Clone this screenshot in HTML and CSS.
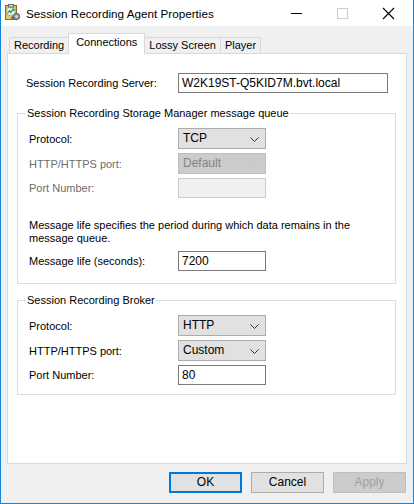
FILE: index.html
```html
<!DOCTYPE html>
<html lang="en">
    <head>
        <title>Session Recording Agent Properties</title>
        <meta charset="utf-8" />
        <link rel="stylesheet" href="styles.css">
    </head>

    <body>
        <div class="window">
            <div class="titleBar">
                <svg class="appIcon" width="16" height="17" viewBox="0 0 16 17">
                    <!-- clipboard with a small chart, plus a gear -->
                    <rect x="0.5" y="1.5" width="11" height="14" fill="#e8c46a" stroke="#8a6a20" />
                    <rect x="3.5" y="0.5" width="5" height="2.5" fill="#d9d9d9" stroke="#666" />
                    <rect x="2" y="4" width="8" height="7" fill="#ffffff" stroke="#7a9a7a" stroke-width="0.6" />
                    <polyline points="2.5,9.5 4.5,6.5 6,8.5 8,5 9.5,7" fill="none" stroke="#2f9a3a" stroke-width="1.3" />
                    <circle cx="11.5" cy="12.5" r="3.2" fill="#8f9aa6" stroke="#556170" />
                    <circle cx="11.5" cy="12.5" r="1.2" fill="#dfe3e8" />
                    <path d="M6.5 14.5 L9 12.5" stroke="#556170" stroke-width="2" />
                </svg>
                <span class="title">Session Recording Agent Properties</span>
                <div class="captionButtons">
                    <svg class="capBtn" width="46" height="26" viewBox="0 0 46 26">
                        <line x1="18" y1="13.5" x2="29" y2="13.5" stroke="#000" />
                    </svg>
                    <svg class="capBtn" width="46" height="26" viewBox="0 0 46 26">
                        <rect x="18.5" y="8.5" width="10" height="10" fill="none" stroke="#cccccc" />
                    </svg>
                    <svg class="capBtn" width="46" height="26" viewBox="0 0 46 26">
                        <path d="M18 8 L29 19 M29 8 L18 19" stroke="#000" stroke-width="1.1" />
                    </svg>
                </div>
            </div>

            <div class="tabStrip">
                <div class="tab">Recording</div>
                <div class="tab active">Connections</div>
                <div class="tab">Lossy Screen</div>
                <div class="tab">Player</div>
            </div>

            <div class="tabPanel">
                <div class="serverRow">
                    <span class="serverLabel">Session Recording Server:</span>
                    <div class="field serverField">W2K19ST-Q5KID7M.bvt.local</div>
                </div>

                <fieldset class="group">
                    <legend>Session Recording Storage Manager message queue</legend>
                    <div class="row">
                        <span class="label">Protocol:</span>
                        <div class="combo">TCP
                            <svg class="chevron" width="9" height="5" viewBox="0 0 9 5"><polyline points="0.5,0.5 4.5,4.5 8.5,0.5" fill="none" stroke="#333" /></svg>
                        </div>
                    </div>
                    <div class="row">
                        <span class="label disabled">HTTP/HTTPS port:</span>
                        <div class="combo disabled">Default
                            <svg class="chevron" width="9" height="5" viewBox="0 0 9 5"><polyline points="0.5,0.5 4.5,4.5 8.5,0.5" fill="none" stroke="#bfbfbf" /></svg>
                        </div>
                    </div>
                    <div class="row">
                        <span class="label disabled">Port Number:</span>
                        <div class="field small disabled"></div>
                    </div>
                    <p class="note">Message life specifies the period during which data remains in the message queue.</p>
                    <div class="row">
                        <span class="label">Message life (seconds):</span>
                        <div class="field small">7200</div>
                    </div>
                </fieldset>

                <fieldset class="group broker">
                    <legend>Session Recording Broker</legend>
                    <div class="row">
                        <span class="label">Protocol:</span>
                        <div class="combo">HTTP
                            <svg class="chevron" width="9" height="5" viewBox="0 0 9 5"><polyline points="0.5,0.5 4.5,4.5 8.5,0.5" fill="none" stroke="#333" /></svg>
                        </div>
                    </div>
                    <div class="row">
                        <span class="label">HTTP/HTTPS port:</span>
                        <div class="combo">Custom
                            <svg class="chevron" width="9" height="5" viewBox="0 0 9 5"><polyline points="0.5,0.5 4.5,4.5 8.5,0.5" fill="none" stroke="#333" /></svg>
                        </div>
                    </div>
                    <div class="row">
                        <span class="label">Port Number:</span>
                        <div class="field small">80</div>
                    </div>
                </fieldset>
            </div>

            <div class="buttonBar">
                <div class="btn default">OK</div>
                <div class="btn">Cancel</div>
                <div class="btn disabled">Apply</div>
            </div>
        </div>
    </body>
</html>
```

FILE: styles.css
```css
body {
    margin: 0;
    padding: 0;
    background-color: #ffffff;
    font-family: "Liberation Sans", Arial, sans-serif;
    font-size: 11px;
    color: #000000;
}

.window {
    width: 414px;
    height: 504px;
    box-sizing: border-box;
    border: 1px solid #1883d7;
    border-top: none;
    background-color: #f0f0f0;
    display: flex;
    flex-direction: column;
}

/* caption */
.titleBar {
    height: 26px;
    background-color: #ffffff;
    display: flex;
    align-items: center;
}

.appIcon {
    margin-left: 4px;
    margin-top: -1px;
}

.title {
    margin-left: 5px;
    font-size: 11.7px;
    flex: 1;
}

.captionButtons {
    display: flex;
    margin-right: 2px;
}

.capBtn {
    display: block;
}

/* tabs */
.tabStrip {
    height: 27px;
    display: flex;
    align-items: flex-end;
    padding-left: 9px;
}

.tab {
    height: 15px;
    line-height: 15px;
    padding: 0 4px;
    border: 1px solid #d9d9d9;
    border-bottom: none;
    margin-left: -1px;
    background-color: #f0f0f0;
}

.tab.active {
    height: 20px;
    line-height: 16px;
    background-color: #ffffff;
    padding: 0 7px;
    margin-bottom: -1px;
    position: relative;
    z-index: 1;
}

.tabPanel {
    margin: 0 6px 0 6px;
    height: 411px;
    box-sizing: border-box;
    border: 1px solid #d9d9d9;
    background-color: #ffffff;
    padding: 19px 10px 0 9px;
}

.serverRow {
    display: flex;
    align-items: center;
}

.serverLabel {
    width: 152px;
    padding-left: 9px;
}

/* text boxes and combos */
.field {
    height: 20px;
    box-sizing: border-box;
    border: 1px solid #7a7a7a;
    background-color: #ffffff;
    line-height: 18px;
    padding-left: 3px;
    font-size: 12px;
}

.serverField {
    width: 210px;
}

.field.small {
    width: 88px;
}

.field.disabled {
    border-color: #cccccc;
    background-color: #f0f0f0;
}

.combo {
    width: 88px;
    height: 21px;
    box-sizing: border-box;
    border: 1px solid #adadad;
    background-color: #e1e1e1;
    line-height: 19px;
    padding-left: 4px;
    font-size: 12px;
    position: relative;
}

.combo.disabled {
    border-color: #bfbfbf;
    background-color: #cccccc;
    color: #838383;
}

.chevron {
    position: absolute;
    right: 6px;
    top: 8px;
}

/* group boxes */
.group {
    margin: 14px 0 0 0;
    padding: 8px 10px 12px 11px;
    border: 1px solid #dcdcdc;
    min-width: 0;
}

.group legend {
    padding: 0 1px;
    margin-left: -3px;
    line-height: 13px;
}

.group.broker {
    margin-top: 10px;
    padding-bottom: 9px;
}

.row {
    display: flex;
    align-items: center;
    margin-bottom: 4px;
}

.row:last-child {
    margin-bottom: 0;
}

.label {
    width: 149px;
}

.label.disabled {
    color: #6d6d6d;
}

.note {
    margin: 21px 0 6px 0;
    line-height: 13px;
}

/* bottom buttons */
.buttonBar {
    display: flex;
    justify-content: flex-end;
    gap: 9px;
    margin: 8px 7px 0 0;
}

.btn {
    width: 73px;
    height: 21px;
    box-sizing: border-box;
    border: 1px solid #adadad;
    background-color: #e1e1e1;
    text-align: center;
    line-height: 19px;
    font-size: 12px;
}

.btn.default {
    border: 2px solid #0078d7;
    line-height: 17px;
}

.btn.disabled {
    border-color: #bfbfbf;
    background-color: #cccccc;
    color: #a0a0a0;
}
```
